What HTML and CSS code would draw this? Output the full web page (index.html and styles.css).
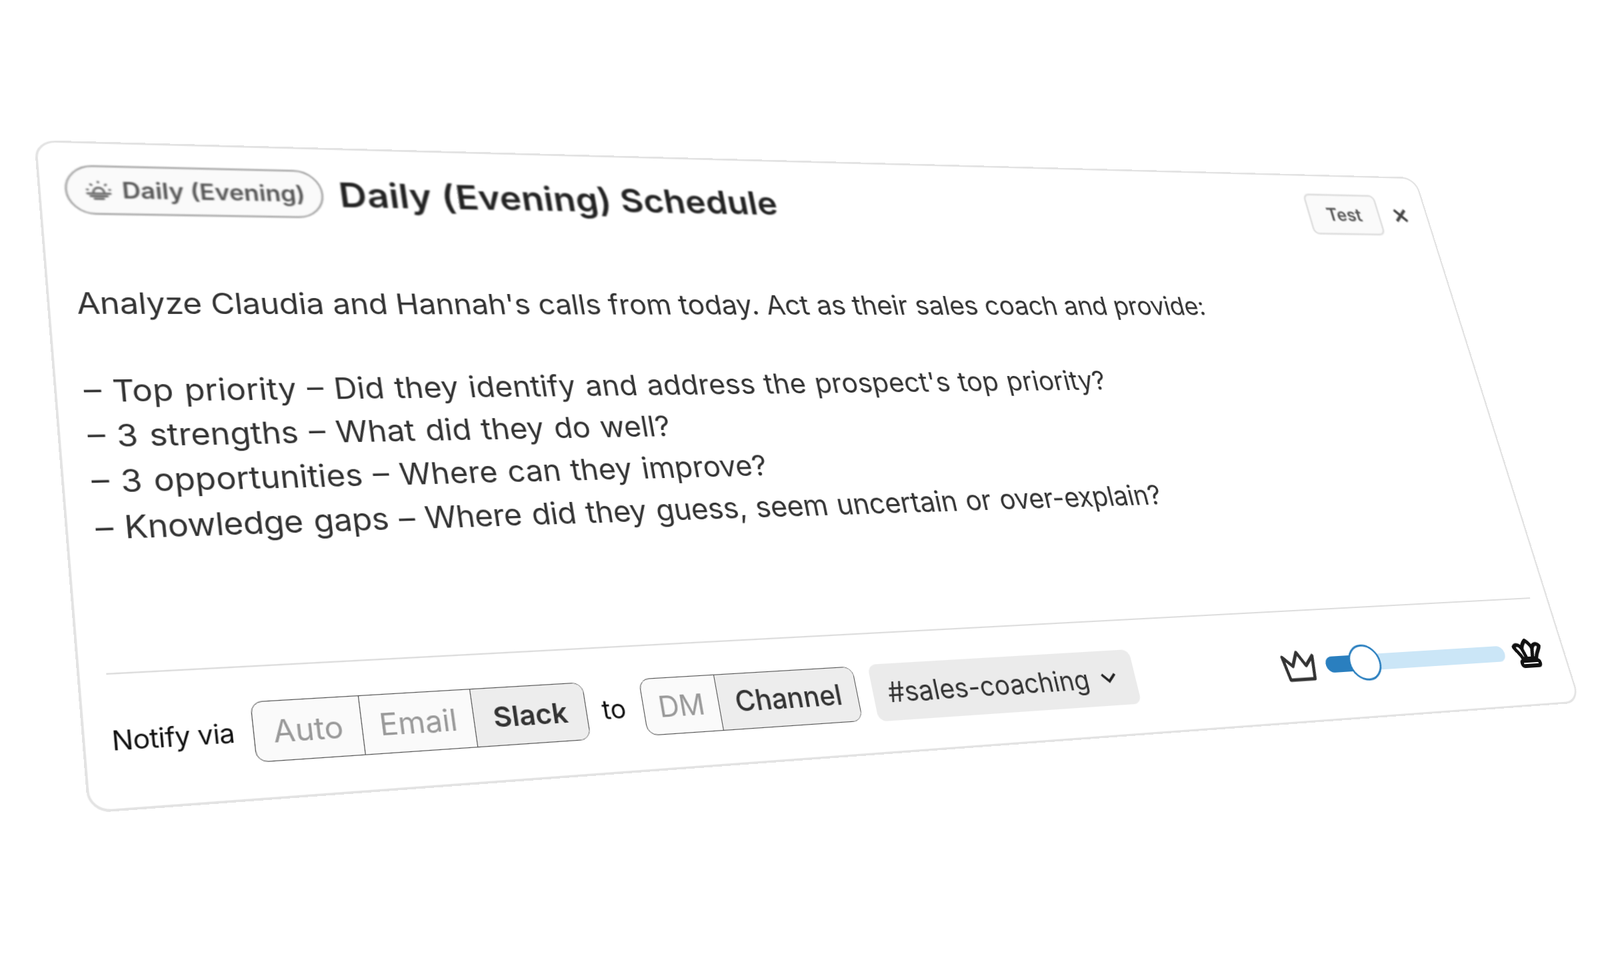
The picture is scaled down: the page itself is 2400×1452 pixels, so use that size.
FILE: index.html
```html
<!DOCTYPE html>
<html lang="en">
<head>
<meta charset="utf-8">
<title>Daily (Evening) Schedule</title>
<link rel="stylesheet" href="styles.css">
</head>
<body>
<section class="card">
  <header class="head">
    <span class="pill">
      <svg class="sun" viewBox="0 0 36 30" aria-hidden="true">
        <path class="sun-arc" d="M11 18a7 7 0 0 1 14 0"/>
        <path class="sun-ray" d="M18 2v1M8 6l1 1M28 6l-1 1M3 14h1M32 14h1"/>
        <path class="sun-line" d="M3 20h30M7 24h22M12 28h12"/>
      </svg>
      Daily (Evening)
    </span>
    <h1 class="title">Daily (Evening) Schedule</h1>
    <button class="test">Test</button>
    <svg class="close" viewBox="0 0 20 20" aria-hidden="true"><path d="M2 2l16 16M18 2L2 18"/></svg>
  </header>
  <div class="prompt"><div class="prompt-intro">Analyze Claudia and Hannah's calls from today. Act as their sales coach and provide:</div><div class="prompt-gap"></div><div class="prompt-line">– Top priority – Did they identify and address the prospect's top priority?</div><div class="prompt-line">– 3 strengths – What did they do well?</div><div class="prompt-line">– 3 opportunities – Where can they improve?</div><div class="prompt-line prompt-last">– Knowledge gaps – Where did they guess, seem uncertain or over-explain?</div></div>
  <footer class="foot">
    <span class="label label-via">Notify via</span>
    <div class="seg">
      <span class="seg-item seg-auto">Auto</span>
      <span class="seg-item seg-email">Email</span>
      <span class="seg-item seg-slack is-on">Slack</span>
    </div>
    <span class="label">to</span>
    <div class="seg seg-dest">
      <span class="seg-item seg-dm">DM</span>
      <span class="seg-item seg-channel is-on">Channel</span>
    </div>
    <div class="select">
      <span>#sales-coaching</span>
      <svg class="chev" viewBox="0 0 20 12" aria-hidden="true"><path d="M2 2l8 8 8-8"/></svg>
    </div>
    <div class="model">
      <svg class="crown" viewBox="0 0 58 50" aria-hidden="true"><path d="M9 45L4 11l14 14L29 5l11 20 14-14-5 34z"/></svg>
      <div class="track"><div class="fill"></div><div class="thumb"></div></div>
      <svg class="queen" viewBox="0 0 54 52" aria-hidden="true">
        <path class="queen-top" d="M15 37C13 29 6 24 4 18c5-5 11-3 14 4 1-6 5-10 9-13 4 3 8 7 9 13 3-7 9-9 14-4-2 6-9 11-11 19z"/>
        <path class="queen-top" d="M18 22l4 15M36 22l-4 15"/>
        <rect class="queen-base" x="11" y="40" width="32" height="8" rx="3"/>
      </svg>
    </div>
  </footer>
</section>
</body>
</html>
```
FILE: styles.css
```css
* { box-sizing: border-box; }
html, body { margin: 0; height: 100%; background: #fff; overflow: hidden; }
body { font-family: Inter, "Liberation Sans", sans-serif; color: #222; }

.card {
  width: 2120px;
  height: 880px;
  display: flex;
  flex-direction: column;
  background: #fff;
  border: 3px solid #e3e3e3;
  border-radius: 26px;
  transform-origin: 0 0;
  transform: matrix3d(1.23767, 0.059033, 0, 0.00012262,
                      0.076534, 1.00441, 0, -0.00011748,
                      0, 0, 1, 0,
                      51, 210, 0, 1);
}

.head {
  display: flex;
  align-items: center;
  height: 71px;
  margin: 32px 0 0 30px;
  filter: blur(0.9px);
}
.pill {
  display: flex;
  align-items: center;
  gap: 12px;
  width: 327px;
  height: 71px;
  padding-left: 22px;
  border: 2.5px solid #8a8a8a;
  border-radius: 36px;
  background: #fafafa;
  font-size: 32px;
  font-weight: 600;
  color: #555;
  white-space: nowrap;
}
.sun { width: 34px; height: 30px; flex: none; fill: none; stroke: #666; stroke-width: 3; stroke-linecap: round; }
.title {
  margin: 0 0 0 21px;
  font-size: 51px;
  font-weight: 600;
  color: #222;
  letter-spacing: 0.3px;
}
.test {
  margin-left: auto;
  width: 132px;
  height: 71px;
  border: 2.5px solid #ccc;
  border-radius: 10px;
  background: #fafafa;
  font: 600 31px Inter, sans-serif;
  color: #555;
}
.close { width: 25px; height: 25px; margin: 0 36px 0 28px; fill: none; stroke: #444; stroke-width: 4; }

.prompt {
  margin: 95px 0 0 32px;
  font-size: 41px;
  line-height: 60px;
  color: #333;
  white-space: nowrap;
  letter-spacing: -0.25px;
}
.prompt-intro { filter: blur(0.7px); }
.prompt-gap { height: 60px; }
.prompt-line { filter: blur(0.4px); letter-spacing: 0; word-spacing: 2px; }
.prompt-last { letter-spacing: -0.3px; }

.foot {
  margin: auto 29px 0 30px;
  height: 163px;
  border-top: 2.5px solid #ddd;
  display: flex;
  align-items: center;
  gap: 20px;
}
.label { font-size: 34px; color: #111; }
.label-via { margin-right: 2px; font-size: 32px; letter-spacing: -0.4px; }
.seg {
  display: flex;
  height: 75px;
  border: 1.5px solid #555;
  border-radius: 14px;
  overflow: hidden;
  background: #fafafa;
}
.seg-dest { margin-left: 3px; }
.seg-item {
  display: flex;
  align-items: center;
  justify-content: center;
  font-size: 38px;
  color: #999;
  border-right: 1.5px solid #555;
}
.seg-item:last-child { border-right: 0; }
.seg-auto { width: 129px; }
.seg-email { width: 138px; }
.seg-slack { width: 143px; }
.seg-dm { width: 101px; }
.seg-channel { width: 192px; }
.is-on { background: #ededed; color: #333; font-weight: 500; }
.seg-slack { font-size: 36px; font-weight: 600; }
.seg-channel { font-size: 37.5px; }
.select {
  display: flex;
  align-items: center;
  justify-content: space-between;
  width: 393px;
  height: 78px;
  margin-left: 2px;
  padding: 0 28px 0 21px;
  border-radius: 12px;
  background: #ebebeb;
  font-size: 38px;
  color: #333;
}
.chev { width: 26px; height: 15px; fill: none; stroke: #222; stroke-width: 3; }
.model { display: flex; align-items: center; margin-left: auto; }
.crown { width: 58px; height: 50px; margin-right: 15px; fill: none; stroke: #333; stroke-width: 5; stroke-linejoin: round; }
.track { position: relative; width: 311px; height: 24px; margin-top: 2px; border-radius: 12px; background: #cbe6f7; }
.fill { width: 66px; height: 100%; border-radius: 12px 0 0 12px; background: #2a7fbf; }
.thumb {
  position: absolute;
  left: 39px;
  top: -15px;
  width: 54px;
  height: 54px;
  border-radius: 50%;
  border: 3px solid #2a7fbf;
  background: #fff;
}
.queen { width: 54px; height: 52px; margin: 0 7px 0 15px; fill: none; stroke: #111; stroke-width: 6; stroke-linejoin: round; }
.queen-top { fill: #fff; }
```
